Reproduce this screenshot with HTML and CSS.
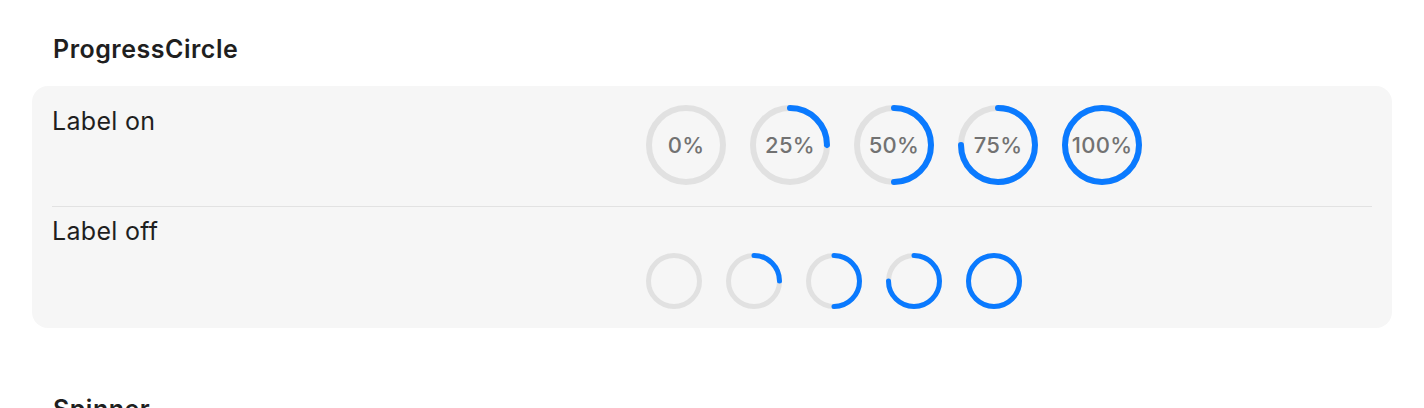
FILE: index.html
```html
<!DOCTYPE html>
<html lang="en">
<head>
<meta charset="utf-8">
<title>ProgressCircle</title>
<link rel="stylesheet" href="styles.css">
</head>
<body>
<main class="page">
  <section class="section">
    <h2 class="section-title">ProgressCircle</h2>
    <div class="card">
      <div class="row row-first">
        <div class="row-label">Label on</div>
        <div class="row-content">
          <div class="pc pc-lg">
            <svg viewBox="0 0 80 80" width="80" height="80"><circle class="track" cx="40" cy="40" r="37"/></svg>
            <span class="pc-text">0%</span>
          </div>
          <div class="pc pc-lg">
            <svg viewBox="0 0 80 80" width="80" height="80"><circle class="track" cx="40" cy="40" r="37"/><circle class="bar" cx="40" cy="40" r="37" pathLength="100" stroke-dasharray="25 100" transform="rotate(-90 40 40)"/></svg>
            <span class="pc-text">25%</span>
          </div>
          <div class="pc pc-lg">
            <svg viewBox="0 0 80 80" width="80" height="80"><circle class="track" cx="40" cy="40" r="37"/><circle class="bar" cx="40" cy="40" r="37" pathLength="100" stroke-dasharray="50 100" transform="rotate(-90 40 40)"/></svg>
            <span class="pc-text">50%</span>
          </div>
          <div class="pc pc-lg">
            <svg viewBox="0 0 80 80" width="80" height="80"><circle class="track" cx="40" cy="40" r="37"/><circle class="bar" cx="40" cy="40" r="37" pathLength="100" stroke-dasharray="75 100" transform="rotate(-90 40 40)"/></svg>
            <span class="pc-text">75%</span>
          </div>
          <div class="pc pc-lg">
            <svg viewBox="0 0 80 80" width="80" height="80"><circle class="track" cx="40" cy="40" r="37"/><circle class="bar" cx="40" cy="40" r="37" pathLength="100" stroke-dasharray="100 0" transform="rotate(-90 40 40)"/></svg>
            <span class="pc-text">100%</span>
          </div>
        </div>
      </div>
      <div class="row row-second">
        <div class="row-label">Label off</div>
        <div class="row-content row-content-off">
          <div class="pc pc-sm">
            <svg viewBox="0 0 56 56" width="56" height="56"><circle class="track" cx="28" cy="28" r="25.5"/></svg>
          </div>
          <div class="pc pc-sm">
            <svg viewBox="0 0 56 56" width="56" height="56"><circle class="track" cx="28" cy="28" r="25.5"/><circle class="bar" cx="28" cy="28" r="25.5" pathLength="100" stroke-dasharray="25 100" transform="rotate(-90 28 28)"/></svg>
          </div>
          <div class="pc pc-sm">
            <svg viewBox="0 0 56 56" width="56" height="56"><circle class="track" cx="28" cy="28" r="25.5"/><circle class="bar" cx="28" cy="28" r="25.5" pathLength="100" stroke-dasharray="50 100" transform="rotate(-90 28 28)"/></svg>
          </div>
          <div class="pc pc-sm">
            <svg viewBox="0 0 56 56" width="56" height="56"><circle class="track" cx="28" cy="28" r="25.5"/><circle class="bar" cx="28" cy="28" r="25.5" pathLength="100" stroke-dasharray="75 100" transform="rotate(-90 28 28)"/></svg>
          </div>
          <div class="pc pc-sm">
            <svg viewBox="0 0 56 56" width="56" height="56"><circle class="track" cx="28" cy="28" r="25.5"/><circle class="bar" cx="28" cy="28" r="25.5" pathLength="100" stroke-dasharray="100 0" transform="rotate(-90 28 28)"/></svg>
          </div>
        </div>
      </div>
    </div>
  </section>
  <section class="section">
    <h2 class="section-title">Spinner</h2>
  </section>
</main>
</body>
</html>
```

FILE: styles.css
```css
* { box-sizing: border-box; }
html, body { margin: 0; padding: 0; background: #ffffff; }
body {
  font-family: Inter, "Noto Sans", "Liberation Sans", sans-serif;
  color: #1f1f1f;
}
.page {
  padding: 0 32px;
}
.section {
  padding-top: 34px;
  padding-bottom: 32px;
}
.section-title {
  margin: 0 0 22px 21px;
  font-size: 25px;
  line-height: 30px;
  font-weight: 600;
  letter-spacing: 0.5px;
  color: #1f1f1f;
}
.card {
  background: #f6f6f6;
  border-radius: 16px;
  padding: 0 20px;
}
.row {
  display: grid;
  grid-template-columns: 594px 1fr;
}
.row-first {
  padding: 19px 0 21px;
  border-bottom: 1px solid #e2e2e2;
}
.row-second {
  padding: 8px 0 19px;
}
.row-label {
  font-size: 25px;
  line-height: 32px;
  letter-spacing: 0.3px;
  color: #1f1f1f;
}
.row-content {
  display: flex;
  align-items: center;
  gap: 24px;
}
.row-content-off {
  margin-top: 38px;
}
.pc {
  position: relative;
  display: flex;
  align-items: center;
  justify-content: center;
}
.pc svg { display: block; }
.pc-lg .track, .pc-lg .bar { stroke-width: 6; }
.pc-sm .track, .pc-sm .bar { stroke-width: 5; }
.track {
  fill: none;
  stroke: #e1e1e1;
}
.bar {
  fill: none;
  stroke: #0a7aff;
  stroke-linecap: round;
}
.pc-text {
  position: absolute;
  font-size: 22px;
  font-weight: 500;
  color: #727272;
  letter-spacing: 0.3px;
}
```
